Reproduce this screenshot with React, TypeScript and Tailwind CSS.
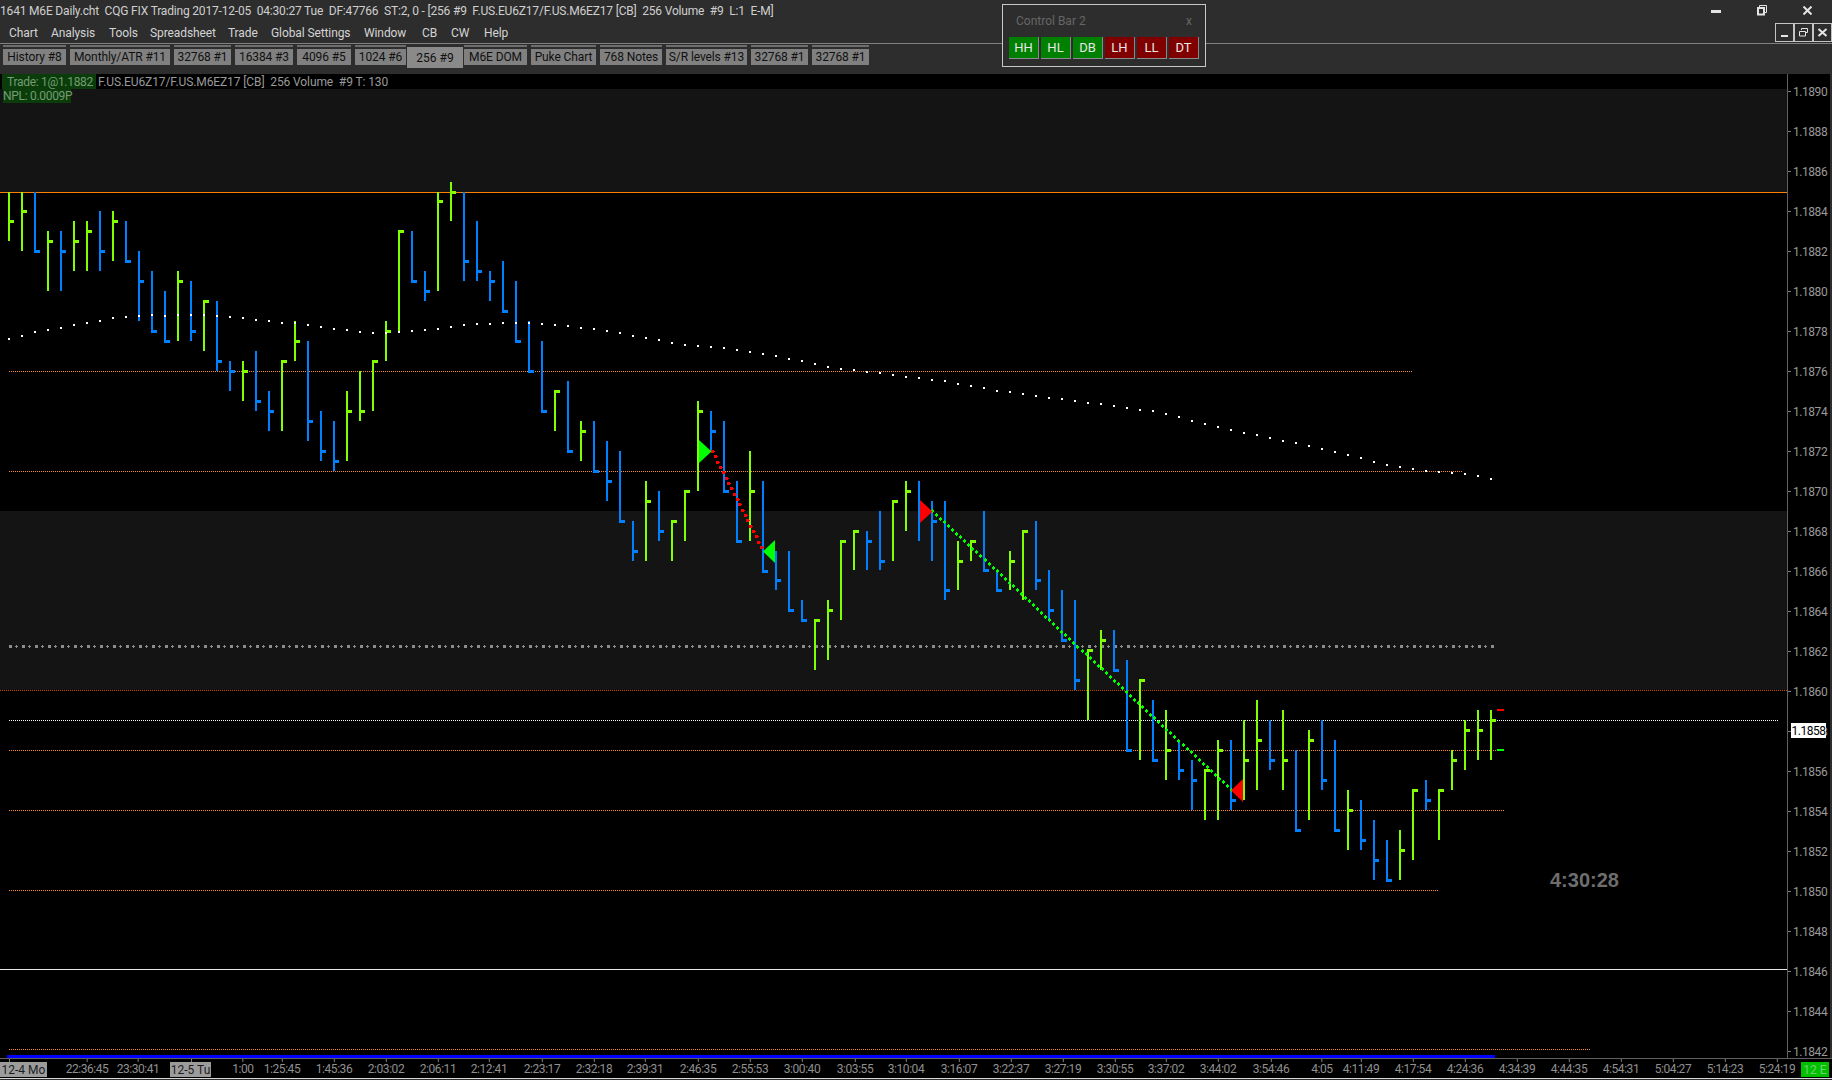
const FONT = "font-['Roboto',sans-serif]";

const menu = [
  { label: 'Chart', cls: 'w-[42px]' },
  { label: 'Analysis', cls: 'w-[58px]' },
  { label: 'Tools', cls: 'w-[41px]' },
  { label: 'Spreadsheet', cls: 'w-[78px]' },
  { label: 'Trade', cls: 'w-[43px]' },
  { label: 'Global Settings', cls: 'w-[93px]' },
  { label: 'Window', cls: 'w-[58px]' },
  { label: 'CB', cls: 'w-[29px]' },
  { label: 'CW', cls: 'w-[33px]' },
  { label: 'Help', cls: 'w-[40px]' },
];

const tabs = [
  { label: 'History #8', cls: 'w-[63px]' },
  { label: 'Monthly/ATR #11', cls: 'w-[100px]' },
  { label: '32768 #1', cls: 'w-[57px]' },
  { label: '16384 #3', cls: 'w-[58px]' },
  { label: '4096 #5', cls: 'w-[54px]' },
  { label: '1024 #6', cls: 'w-[51px]' },
  { label: '256 #9', cls: 'w-[56px]', active: true },
  { label: 'M6E DOM', cls: 'w-[63px]' },
  { label: 'Puke Chart', cls: 'w-[65px]' },
  { label: '768 Notes', cls: 'w-[62px]' },
  { label: 'S/R levels #13', cls: 'w-[81px]' },
  { label: '32768 #1', cls: 'w-[57px]' },
  { label: '32768 #1', cls: 'w-[57px]' },
];

const buttons = [
  { label: 'HH', up: true },
  { label: 'HL', up: true },
  { label: 'DB', up: true },
  { label: 'LH', up: false },
  { label: 'LL', up: false },
  { label: 'DT', up: false },
];

// one bar every 13px from x=9: colour (g/b), high y, low y, close y
const bars = `g 192 241 221,g 192 251 211,b 192 251 251,g 231 291 241,b 231 291 251,g 221 271 241,g 221 271 231,b 211 271 251,g 211 261 221,b 221 261 261,
b 251 321 281,b 271 331 331,b 291 341 341,g 271 341 281,b 281 341 331,g 301 351 301,b 301 371 361,b 361 391 371,g 361 401 371,b 351 411 401,
b 391 431 411,g 361 431 361,g 321 361 341,b 341 441 421,b 411 461 451,b 421 471 461,g 391 461 411,g 371 421 411,g 361 411 361,g 321 361 331,
g 231 331 231,b 231 281 281,b 271 301 291,g 192 291 201,g 182 221 192,b 192 281 261,b 221 281 271,b 271 301 281,b 261 311 311,b 281 341 341,
b 321 371 371,b 341 411 411,g 391 431 391,b 381 451 451,g 421 461 431,b 421 471 471,b 441 501 481,b 451 521 521,b 521 561 551,g 481 561 501,
b 491 541 531,g 521 561 521,g 491 541 491,g 401 491 411,b 411 451 431,b 421 491 491,b 481 541 541,g 451 541 491,b 481 571 571,b 551 590 580,
b 551 611 610,b 600 621 620,g 619 670 620,g 600 660 610,g 540 620 541,g 530 570 531,b 531 570 541,b 511 570 561,g 501 561 501,g 481 531 491,
b 481 541 511,b 501 561 521,b 501 600 590,g 541 590 561,g 540 561 541,b 511 571 570,b 570 592 590,g 551 590 561,g 530 600 531,b 521 590 580,
b 570 620 610,b 590 641 640,b 600 690 680,g 649 720 650,g 630 670 640,b 630 671 670,b 660 751 750,g 679 760 680,b 700 761 760,g 710 780 750,
b 740 780 770,b 760 810 780,g 769 820 770,g 740 820 750,b 740 810 800,g 720 800 760,g 700 790 740,b 720 770 760,g 710 790 760,b 750 832 830,
g 730 820 740,b 720 790 780,b 740 832 830,g 790 850 810,b 800 850 840,b 820 880 860,b 840 882 880,g 830 880 850,g 789 860 790,b 780 810 800,
g 789 840 790,g 750 790 760,g 720 770 730,g 710 760 730,g 710 760 720`
  .split(',')
  .map((row, i) => {
    const [c, hi, lo, close] = row.trim().split(' ');
    return { x: 9 + 13 * i, c, hi: +hi, lo: +lo, close: +close };
  });

// moving average dots, one per bar up to x=828 then read off the slope
const emaHead = [338, 335, 331, 329, 327, 324, 322, 320, 317, 316, 315, 314, 315, 314, 314, 314, 315, 316, 317, 319, 320, 322, 322, 324, 326, 328, 329, 331, 332, 332, 331, 330,
  329, 328, 326, 324, 323, 323, 322, 322, 322, 323, 324, 325, 327, 328, 330, 332, 335, 337, 339, 342, 344, 345, 346, 347, 349, 351, 353, 355, 358, 360, 363, 366];
const emaKnots = [[828, 366], [851, 369], [944, 380], [993, 389], [1157, 411], [1227, 428], [1285, 440], [1344, 453], [1390, 465], [1437, 471], [1460, 472], [1493, 478]];

function emaAt(x: number) {
  for (let k = 0; k < emaKnots.length - 1; k++) {
    const [x0, y0] = emaKnots[k];
    const [x1, y1] = emaKnots[k + 1];
    if (x <= x1) return Math.round(y0 + ((y1 - y0) * (x - x0)) / (x1 - x0));
  }
  return 478;
}

const ema = bars.map((b, i) => ({ x: b.x, y: i < emaHead.length ? emaHead[i] : emaAt(b.x) }));

const prices = ['1.1890', '1.1888', '1.1886', '1.1884', '1.1882', '1.1880', '1.1878', '1.1876', '1.1874', '1.1872', '1.1870', '1.1868', '1.1866', '1.1864', '1.1862', '1.1860', '1.1858', '1.1856', '1.1854', '1.1852', '1.1850', '1.1848', '1.1846', '1.1844', '1.1842'];

const times = [
  ['22:36:45', 87], ['23:30:41', 138], ['1:00', 243], ['1:25:45', 282], ['1:45:36', 334], ['2:03:02', 386], ['2:06:11', 438], ['2:12:41', 489], ['2:23:17', 542], ['2:32:18', 594],
  ['2:39:31', 645], ['2:46:35', 698], ['2:55:53', 750], ['3:00:40', 802], ['3:03:55', 855], ['3:10:04', 906], ['3:16:07', 959], ['3:22:37', 1011], ['3:27:19', 1063], ['3:30:55', 1115],
  ['3:37:02', 1166], ['3:44:02', 1218], ['3:54:46', 1271], ['4:05', 1322], ['4:11:49', 1361], ['4:17:54', 1413], ['4:24:36', 1465], ['4:34:39', 1517], ['4:44:35', 1569], ['4:54:31', 1621],
  ['5:04:27', 1673], ['5:14:23', 1725], ['5:24:19', 1777],
] as const;

const midLine = Array.from({ length: 115 }, (_, i) => 9 + 13 * i);

function signalDots(x0: number, y0: number, x1: number, y1: number, n: number) {
  return Array.from({ length: n + 1 }, (_, i) => [
    Math.round(x0 + ((x1 - x0) * i) / n),
    Math.round(y0 + ((y1 - y0) * i) / n),
  ]);
}

function Chart() {
  return (
    <svg width={1787} height={984} viewBox="0 74 1787 984" shapeRendering="crispEdges" className="block">
      <rect x={0} y={74} width={1787} height={984} fill="#000000" />
      <rect x={0} y={89} width={1787} height={103} fill="#141414" />
      <rect x={0} y={511} width={1787} height={179} fill="#141414" />

      <rect x={0} y={192} width={1787} height={1} fill="#ff8000" />
      <line x1={0} x2={1787} y1={690.5} y2={690.5} stroke="#c04a00" strokeDasharray="1 1" />
      <rect x={0} y={969} width={1787} height={1} fill="#e8e8e8" />

      <line x1={9} x2={1412} y1={371.5} y2={371.5} stroke="#ff8c30" strokeDasharray="1 1" />
      <line x1={9} x2={1462} y1={471.5} y2={471.5} stroke="#ff8c30" strokeDasharray="1 1" />
      <line x1={9} x2={1504} y1={750.5} y2={750.5} stroke="#ff8c30" strokeDasharray="1 1" />
      <line x1={9} x2={1504} y1={810.5} y2={810.5} stroke="#ff8c30" strokeDasharray="1 1" />
      <line x1={9} x2={1438} y1={890.5} y2={890.5} stroke="#ff8c30" strokeDasharray="1 1" />
      <line x1={9} x2={1590} y1={1049.5} y2={1049.5} stroke="#ff8c30" strokeDasharray="1 1" />
      <line x1={9} x2={1778} y1={720.5} y2={720.5} stroke="#ffffff" strokeDasharray="1 1" />

      {midLine.map((x) => (
        <g key={x} fill="#8c8c8c">
          <rect x={x} y={645} width={3} height={3} />
          {x < 1491 && <rect x={x + 6} y={646} width={3} height={1} />}
          {x < 1491 && <rect x={x + 7} y={645} width={1} height={3} />}
        </g>
      ))}

      <rect x={7} y={1055} width={1488} height={3} fill="#0000ff" />

      {bars.map((b) => {
        const fill = b.c === 'g' ? '#80ff00' : '#0080ff';
        const top = Math.min(b.hi, b.close - 1);
        const bottom = Math.max(b.lo, b.close + 2);
        return (
          <g key={b.x} fill={fill}>
            <rect x={b.x - 1} y={top} width={2} height={bottom - top} />
            <rect x={b.x + 1} y={b.close - 1} width={4} height={3} />
          </g>
        );
      })}

      {ema.map((d) => (
        <rect key={d.x} x={d.x - 1} y={d.y} width={2} height={2} fill="#ffffff" />
      ))}

      {signalDots(712, 451, 761, 547, 18).map(([x, y]) => (
        <g key={x} fill="#ff0000">
          <rect x={x - 1} y={y - 1} width={3} height={3} />
          <rect x={x + 2} y={y} width={1} height={1} />
        </g>
      ))}
      {signalDots(932, 511, 1231, 790, 74).map(([x, y]) => (
        <g key={x} fill="#00ff00">
          <rect x={x - 1} y={y - 1} width={3} height={2} />
          <rect x={x} y={y - 2} width={1} height={4} />
        </g>
      ))}

      <g shapeRendering="auto">
        <polygon points="699,440 711.5,451.5 699,463" fill="#00ff00" />
        <polygon points="775,540 763,551.5 775,563" fill="#00ff00" />
        <polygon points="920,500 932.5,511.5 920,523" fill="#ff0000" />
        <polygon points="1243,779 1231,790.5 1243,802" fill="#ff0000" />
      </g>

      <rect x={1497} y={709} width={7} height={2} fill="#ff0000" />
      <rect x={1497} y={749} width={7} height={2} fill="#00ff00" />
    </svg>
  );
}

function WindowButton({ children }: { children: React.ReactNode }) {
  return (
    <div className="flex h-[19px] w-[19px] items-center justify-center border border-[#c4c4c4]">
      <svg width="11" height="11" viewBox="0 0 11 11">{children}</svg>
    </div>
  );
}

export default function App() {
  return (
    <div className={`${FONT} relative flex h-[1080px] w-[1832px] flex-col overflow-hidden bg-[#2d2d2d] text-[12px] text-[#c8c8c8]`}>
      {/* Title bar */}
      <div className="flex h-[22px] items-center justify-between">
        <div className="whitespace-pre tracking-[-0.18px] text-[#cfcfcf]">
          {'1641 M6E Daily.cht  CQG FIX Trading 2017-12-05  04:30:27 Tue  DF:47766  ST:2, 0 - [256 #9  F.US.EU6Z17/F.US.M6EZ17 [CB]  256 Volume  #9  L:1  E-M]'}
        </div>
        <div className="flex items-center gap-[36px] pr-[20px] pb-[2px]">
          <svg width="10" height="3" viewBox="0 0 10 3" className="mt-[3px]"><rect width="10" height="3" fill="#e4e4e4" /></svg>
          <svg width="10" height="11" viewBox="0 0 10 11" fill="none" stroke="#e4e4e4">
            <path d="M2.5 2.5V.5h7v7h-2" />
            <rect x="1" y="3" width="6" height="6.5" strokeWidth="2" />
          </svg>
          <svg width="9" height="9" viewBox="0 0 9 9" stroke="#e4e4e4" strokeWidth="2"><path d="M.5.5l8 8M8.5.5l-8 8" /></svg>
        </div>
      </div>

      {/* Menu */}
      <div className="relative flex h-[22px] items-center justify-between border-b border-[#808080] pl-[9px]">
        <div className="flex tracking-[-0.1px] text-[#d4d4d4]">
          {menu.map((m) => (
            <span key={m.label} className={m.cls}>{m.label}</span>
          ))}
        </div>
        <div className="mt-[1px] flex self-start">
          <WindowButton><rect x="2" y="8" width="7" height="2" fill="#e4e4e4" /></WindowButton>
          <WindowButton><path d="M3.5 3V1.5h6v4H8M1.5 4.5h6v4.5h-6z" fill="none" stroke="#e4e4e4" /></WindowButton>
          <WindowButton><path d="M1.5 2l8 7M9.5 2l-8 7" fill="none" stroke="#e4e4e4" strokeWidth="2" /></WindowButton>
        </div>
      </div>

      {/* Chart tabs */}
      <div className="flex h-[30px] gap-[4px] pl-[3px] pt-[1px] text-[#101010]">
        {tabs.map((t, i) =>
          t.active ? (
            <div key={i} className={`${t.cls} -mx-[3px] mt-[2px] flex h-[21px] items-center justify-center bg-[#8a8a8a]`}>
              {t.label}
            </div>
          ) : (
            <div key={i} className={`${t.cls} flex flex-col`}>
              <div className="h-[2px] bg-[#6e6e6e]" />
              <div className="mt-[2px] flex h-[16px] items-center justify-center whitespace-nowrap bg-[#808080] tracking-[-0.1px]">
                {t.label}
              </div>
            </div>
          ),
        )}
      </div>

      {/* Chart and price scale */}
      <div className="relative flex h-[984px] pr-[2px]">
        <Chart />
        <div className="flex h-[984px] flex-1 flex-col overflow-hidden border-l border-[#606060] bg-black pt-[12px] text-[#9a9a9a]">
          {prices.map((p) => (
            <div key={p} className="flex h-[40px] shrink-0 items-start">
              <span className="mt-[5px] h-[1px] w-[3px] bg-[#808080]" />
              <span className="ml-[2px] h-[12px] leading-[12px] tracking-[-0.45px]">{p}</span>
            </div>
          ))}
        </div>

        {/* Labels over the chart */}
        <div className="absolute left-[2px] top-0 flex h-[15px] items-center">
          <span className="flex h-[15px] w-[94px] items-center whitespace-nowrap bg-[#0a3d0a] pl-[5px] tracking-[-0.3px] text-[#749c74]">Trade: 1@1.1882</span>
          <span className="ml-[2px] whitespace-pre tracking-[-0.1px] text-[#9a9a9a]">{'F.US.EU6Z17/F.US.M6EZ17 [CB]  256 Volume  #9 T: 130'}</span>
        </div>
        <div className="absolute left-[3px] top-[15px] flex h-[14px] w-[68px] items-center whitespace-nowrap bg-[#0a3d0a] tracking-[-0.3px] text-[#749c74]">NPL: 0.0009P</div>
        <div className="absolute left-[1791px] top-[649px] flex h-[15px] w-[35px] items-center justify-center bg-white tracking-[-0.45px] text-black">1.1858</div>
        <div className="absolute left-[1550px] top-[794px] font-['Liberation_Sans',sans-serif] text-[20px] font-bold leading-[24px] text-[#6e6e6e]">4:30:28</div>
      </div>

      {/* Time scale */}
      <div className="relative h-[20px] border-t border-[#606060] bg-black text-[#909090]">
        <span className="absolute left-[9px] top-0 h-[3px] w-[1px] bg-[#808080]" />
        <div className="absolute left-0 top-[3px] flex h-[15px] w-[47px] items-center justify-center bg-[#9c9c9c] text-[#1c1c1c]">12-4 Mo</div>
        <span className="absolute left-[191px] top-0 h-[3px] w-[1px] bg-[#808080]" />
        <div className="absolute left-[170px] top-[3px] flex h-[15px] w-[41px] items-center justify-center bg-[#9c9c9c] text-[#1c1c1c]">12-5 Tu</div>
        {times.map(([label, x]) => (
          <div key={label} className="absolute top-0 flex -translate-x-1/2 flex-col items-center" style={{ left: x }}>
            <span className="h-[3px] w-[1px] bg-[#808080]" />
            <span className="leading-[14px] tracking-[-0.45px]">{label}</span>
          </div>
        ))}
        <div className="absolute left-[1801px] top-[3px] flex h-[15px] w-[28px] items-center justify-center bg-[#00c000] text-[#70d070]">12 E</div>
      </div>

      <div className="h-[2px] border-t border-[#d8d8d8] bg-[#2d2d2d]" />

      {/* Floating control bar */}
      <div className="absolute left-[1002px] top-[4px] flex h-[63px] w-[204px] flex-col border border-[#c8c8c8] bg-[#2d2d2d]">
        <div className="flex h-[32px] items-center justify-between pl-[13px] pr-[13px] text-[#666666]">
          <span>Control Bar 2</span>
          <span>x</span>
        </div>
        <div className="flex gap-[2px] pl-[6px]">
          {buttons.map((b) => (
            <div
              key={b.label}
              className={`flex h-[22px] w-[30px] items-center justify-center border-b border-r border-[#8a8a8a] text-[13px] text-[#e8e8e8] ${b.up ? 'bg-[#008000]' : 'bg-[#800000]'}`}
            >
              {b.label}
            </div>
          ))}
        </div>
      </div>
    </div>
  );
}
